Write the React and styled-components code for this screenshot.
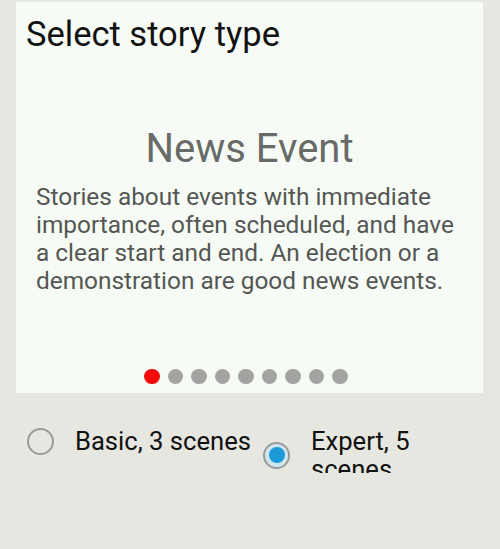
import styled, { createGlobalStyle } from "styled-components";

const GlobalStyle = createGlobalStyle`
  html, body {
    margin: 0;
    padding: 0;
    background: #e6e7e0;
    font-family: Roboto, "Noto Sans", sans-serif;
  }
`;

const Page = styled.div`
  width: 500px;
  height: 549px;
  padding-top: 2px;
  box-sizing: border-box;
  overflow: hidden;
`;

const Card = styled.div`
  margin: 0 17px 0 16px;
  height: 391px;
  background: #f7fbf6;
  display: flex;
  flex-direction: column;
  box-sizing: border-box;
  padding-bottom: 9px;
`;

const Title = styled.h1`
  margin: 0;
  padding: 13px 0 0 10px;
  font-size: 34.5px;
  font-weight: 400;
  line-height: 38px;
  color: #121212;
`;

const Slide = styled.div`
  flex: 1;
  display: flex;
  flex-direction: column;
  padding: 0 20px;
`;

const Heading = styled.h2`
  margin: 73px 0 0;
  text-align: center;
  font-size: 40px;
  font-weight: 400;
  line-height: 46px;
  color: #686b67;
`;

const Description = styled.p`
  margin: 11px 0 0;
  font-size: 24.4px;
  line-height: 28px;
  color: #545753;
`;

const Dots = styled.div`
  display: flex;
  justify-content: center;
  gap: 8px;
  padding-right: 7px;
`;

const Dot = styled.span`
  width: 15.5px;
  height: 15.5px;
  border-radius: 50%;
  background: ${(p) => (p.$active ? "#f30a0a" : "#a3a4a2")};
`;

/* the option row is clipped like a fixed-height list item */
const Options = styled.div`
  display: grid;
  grid-template-columns: 1fr 1fr;
  align-items: start;
  margin-top: 34px;
  padding: 0 12px 0 16px;
  height: 46px;
  overflow: hidden;
`;

const Option = styled.label`
  display: flex;
  align-items: center;
  padding-left: 11px;
  cursor: pointer;
`;

const Circle = styled.span`
  flex: none;
  width: 27px;
  height: 27px;
  border-radius: 50%;
  box-sizing: border-box;
  border: 2px solid #9a9b98;
  display: flex;
  align-items: center;
  justify-content: center;
  background: ${(p) => (p.$checked ? "#cfe6ee" : "transparent")};

  &::after {
    content: "";
    display: ${(p) => (p.$checked ? "block" : "none")};
    width: 16px;
    height: 16px;
    border-radius: 50%;
    background: #1b9ad7;
  }
`;

const Label = styled.span`
  margin-left: 21px;
  font-size: 25.6px;
  line-height: 28px;
  color: #111;
`;

const options = [
  { id: "basic", text: "Basic, 3 scenes" },
  { id: "expert", text: "Expert, 5 scenes" },
];

export default function App() {
  const selected = "expert";
  return (
    <>
      <GlobalStyle />
      <Page>
        <Card>
          <Title>Select story type</Title>
          <Slide>
            <Heading>News Event</Heading>
            <Description>
              Stories about events with immediate importance, often scheduled,
              and have a clear start and end. An election or a demonstration
              are good news events.
            </Description>
          </Slide>
          <Dots>
            {Array.from({ length: 9 }).map((_, i) => (
              <Dot key={i} $active={i === 0} />
            ))}
          </Dots>
        </Card>
        <Options>
          {options.map((o) => (
            <Option key={o.id}>
              <Circle $checked={selected === o.id} />
              <Label>{o.text}</Label>
            </Option>
          ))}
        </Options>
      </Page>
    </>
  );
}
